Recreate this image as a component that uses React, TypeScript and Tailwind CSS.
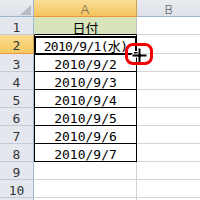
import React from "react";

const dates = ["2010/9/2", "2010/9/3", "2010/9/4", "2010/9/5", "2010/9/6", "2010/9/7"];

function RowHead({ n, active }: { n?: number; active?: boolean }) {
  return (
    <div
      className={
        active
          ? "w-[34px] shrink-0 flex justify-center border-r border-b border-r-[#c8a552] border-b-[#f29436] bg-gradient-to-b from-[#fbdc8c] to-[#f5c963] text-[#333]"
          : "w-[34px] shrink-0 flex justify-center border-r border-b border-r-[#9eb6ce] border-b-[#c5cbd3] bg-[#e4e8ee] text-[#333]"
      }
    >
      <span className="leading-[13px] pt-[4px]">{n}</span>
    </div>
  );
}

function Row({
  n,
  h = "h-[18px]",
  children,
  aClass,
  active,
}: {
  n?: number;
  h?: string;
  children?: React.ReactNode;
  aClass: string;
  active?: boolean;
}) {
  return (
    <div className={`flex ${h}`}>
      <RowHead n={n} active={active} />
      <div className={`w-[103px] shrink-0 flex justify-center border-l border-r border-b ${aClass}`}>
        <span className="leading-[13px] pt-[4px] whitespace-nowrap">{children}</span>
      </div>
      <div className="flex-1 border-b border-[#d4d4d4]" />
    </div>
  );
}

export default function App() {
  return (
    <div className="relative w-[200px] h-[200px] overflow-hidden bg-white text-[13px] text-black font-['DejaVu_Sans_Mono','Noto_Sans_CJK_JP',monospace]">
      {/* column headers */}
      <div className="flex h-[17px]">
        <div className="relative w-[34px] shrink-0 border-r border-b border-r-[#9eb6ce] border-b-[#9eb6ce] bg-gradient-to-b from-[#e9ecf0] to-[#dde1e7]">
          <svg className="absolute left-[20px] top-[5px]" width="11" height="10" viewBox="0 0 11 10">
            <polygon points="11,0 11,10 0,10" fill="#b6bcc4" />
          </svg>
        </div>
        <div className="w-[103px] shrink-0 flex justify-center border-r border-b border-r-[#c8a552] border-b-[#f29436] bg-gradient-to-b from-[#fadf95] to-[#f2c35c] text-[#444]">
          <span className="leading-[13px] pt-[3px] font-['DejaVu_Sans',sans-serif] font-light">A</span>
        </div>
        <div className="flex-1 flex justify-center border-b border-b-[#9eb6ce] bg-gradient-to-b from-[#e9ecf0] to-[#dde1e7] text-[#444]">
          <span className="leading-[13px] pt-[3px] font-['DejaVu_Sans',sans-serif] font-light">B</span>
        </div>
      </div>

      <Row n={1} aClass="bg-[#d8e4bc] border-l-[#d8e4bc] border-r-[#c0c0c0] border-b-black">
        <span className="font-['Noto_Sans_CJK_JP',sans-serif]">日付</span>
      </Row>
      <Row n={2} h="h-[19px]" active aClass="border-black">
        <span className="tracking-[-0.7px]">
          2010/9/1(<span className="font-['Noto_Sans_CJK_JP',sans-serif]">水</span>)
        </span>
      </Row>
      {dates.map((d, i) => (
        <Row key={d} n={i + 3} aClass="border-black">
          {d}
        </Row>
      ))}
      <Row n={9} aClass="border-l-white border-r-[#d4d4d4] border-b-[#d4d4d4]" />
      <Row n={10} aClass="border-l-white border-r-[#d4d4d4] border-b-[#d4d4d4]" />
      <Row aClass="border-l-white border-r-[#d4d4d4] border-b-[#d4d4d4]" />

      {/* selection of A2 */}
      <div className="absolute left-[34px] top-[36px] w-[103px] h-[19px] border-2 border-black" />
      <div className="absolute left-[133px] top-[51px] w-[6px] h-[6px] bg-black border border-white" />

      {/* cross cursor */}
      <svg className="absolute left-[131px] top-[47px]" width="17" height="17" viewBox="0 0 17 17">
        <path d="M7 1h3v6h6v3h-6v6h-3v-6h-6v-3h6z" fill="black" stroke="white" strokeWidth="1" />
      </svg>

      {/* annotation */}
      <div className="absolute left-[125px] top-[43px] w-[28px] h-[22px] border-[3px] border-[#f00000] rounded-[8px]" />
    </div>
  );
}
